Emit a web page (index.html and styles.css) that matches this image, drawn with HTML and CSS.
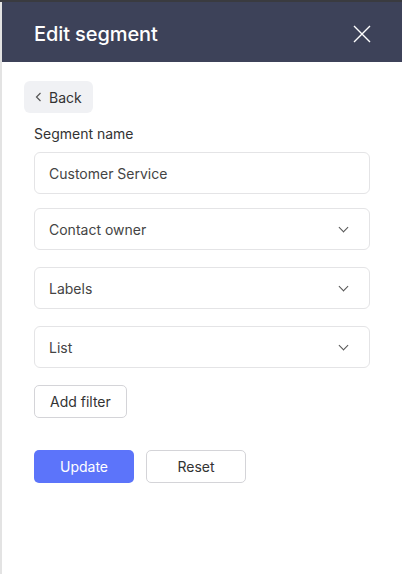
FILE: index.html
```html
<!DOCTYPE html>
<html lang="en">
<head>
  <meta charset="UTF-8">
  <meta name="viewport" content="width=device-width, initial-scale=1.0">
  <title>Edit segment</title>
  <link rel="stylesheet" href="styles.css">
</head>
<body>
  <div id="panel">
    <div class="panel-header">
      <h1 class="panel-title">Edit segment</h1>
      <button class="close" aria-label="Close">
        <svg width="18" height="18" viewBox="0 0 18 18"><path d="M1 1 L17 17 M17 1 L1 17" stroke="#fff" stroke-width="1.4" fill="none"/></svg>
      </button>
    </div>
    <div class="panel-body">
      <button class="back">
        <svg width="7" height="10" viewBox="0 0 7 10"><path d="M5.5 1 L1.5 5 L5.5 9" stroke="#555" stroke-width="1.2" fill="none"/></svg>
        Back
      </button>
      <label class="field-label" for="name">Segment name</label>
      <input id="name" class="field" type="text" value="Customer Service">
      <div class="select">Contact owner<span class="chev"></span></div>
      <div class="select">Labels<span class="chev"></span></div>
      <div class="select">List<span class="chev"></span></div>
      <button class="btn add">Add filter</button>
      <div class="actions">
        <button class="btn primary">Update</button>
        <button class="btn secondary">Reset</button>
      </div>
    </div>
  </div>
</body>
</html>
```
FILE: styles.css
```css
body {
  margin: 0;
  height: 574px;
  background: #e3e3e3;
  border-top: 2px solid #3a3b40;
  box-sizing: border-box;
  padding-left: 2px;
  font-family: Inter, "Noto Sans", sans-serif;
  overflow: hidden;
}

#panel {
  background: #fff;
  height: 100%;
}

.panel-header {
  box-sizing: border-box;
  display: flex;
  align-items: center;
  justify-content: space-between;
  height: 60px;
  padding: 3px 31px 0 32px;
  background: #3d4259;
}

.panel-title {
  margin: 0;
  font-size: 20px;
  font-weight: 500;
  color: #fff;
  letter-spacing: -0.1px;
}

.close {
  display: flex;
  padding: 0;
  border: none;
  background: none;
  cursor: pointer;
}

.panel-body {
  display: flex;
  flex-direction: column;
  align-items: flex-start;
  padding: 19px 30px 0 32px;
}

.back {
  display: flex;
  align-items: center;
  gap: 7px;
  margin-left: -10px;
  height: 32px;
  padding: 0 11px 0 11px;
  border: none;
  border-radius: 6px;
  background: #f0f1f4;
  font-family: inherit;
  font-size: 14px;
  color: #333;
}

.field-label {
  margin-top: 12px;
  font-size: 14px;
  color: #333;
}

.field,
.select {
  box-sizing: border-box;
  width: 336px;
  height: 42px;
  border: 1px solid #e4e4e6;
  border-radius: 6px;
  padding: 0 14px;
  font-family: inherit;
  font-size: 14px;
  color: #444;
}

.field {
  margin-top: 10px;
  outline: none;
}

.select {
  display: flex;
  align-items: center;
  justify-content: space-between;
  margin-top: 14px;
  padding-right: 22px;
}

.select + .select {
  margin-top: 17px;
}

.chev {
  width: 6px;
  height: 6px;
  border-right: 1px solid #555;
  border-bottom: 1px solid #555;
  transform: translateY(-2px) rotate(45deg);
}

.btn {
  box-sizing: border-box;
  height: 33px;
  border-radius: 5px;
  font-family: inherit;
  font-size: 14px;
  cursor: pointer;
}

.add {
  margin-top: 17px;
  padding: 0 15px;
  border: 1px solid #d4d4d8;
  background: #fff;
  color: #333;
}

.actions {
  display: flex;
  gap: 12px;
  margin-top: 32px;
}

.primary {
  width: 100px;
  border: none;
  background: #5c74fa;
  color: #fff;
}

.secondary {
  width: 100px;
  border: 1px solid #d4d4d8;
  background: #fff;
  color: #333;
}
```
